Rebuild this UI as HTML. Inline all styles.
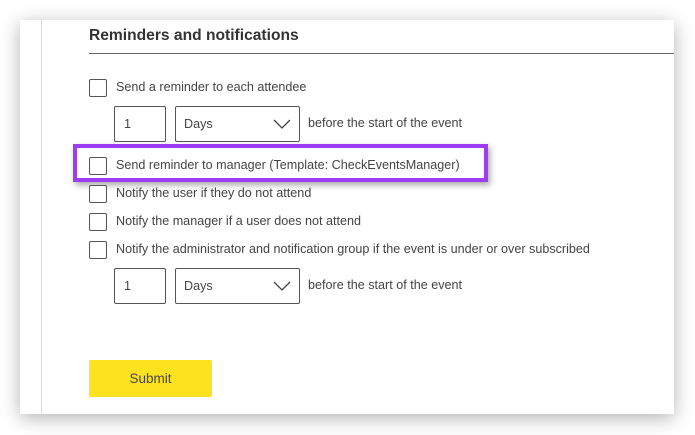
<!DOCTYPE html>
<html><head><style>
body{margin:0;width:695px;height:435px;background:#fff;position:relative;overflow:hidden;font-family:"Liberation Sans",sans-serif;color:#444;}
.panel{position:absolute;left:20px;top:20px;width:654px;height:394px;background:#fff;box-shadow:0 4px 18px rgba(0,0,0,.3);}
.vl{position:absolute;left:41px;top:20px;width:1px;height:394px;background:#ddd;}
.t{position:absolute;left:89px;top:27px;font-size:15.6px;font-weight:bold;color:#333;}
.hr{position:absolute;left:89px;top:53px;width:585px;height:1px;background:#666;}
.cb{position:absolute;left:89px;width:16px;height:16px;border:1px solid #555;border-radius:2px;background:#fff;}
.lb{position:absolute;left:116px;font-size:12.6px;color:#444;}
.in{position:absolute;left:114px;width:50px;height:34px;border:1px solid #555;border-radius:2px;font-size:12.6px;}
.in span{position:absolute;left:9px;top:10px;}
.sel{position:absolute;left:175px;width:123px;height:34px;border:1px solid #555;border-radius:2px;font-size:12.6px;}
.sel span{position:absolute;left:8px;top:10px;}
.sel svg{position:absolute;right:8px;top:12px;}
.bf{position:absolute;left:308px;font-size:12.6px;}
.hl{position:absolute;left:73px;top:144px;width:407px;height:30px;border:4px solid #9d3cf2;box-shadow:2px 3px 6px rgba(0,0,0,.35);}
.btn{position:absolute;left:89px;top:360px;width:123px;height:37px;background:#fde220;border-radius:2px;font-size:13.5px;color:#444;text-align:center;line-height:37px;}
</style></head><body>
<div class="panel"></div>
<div class="vl"></div>
<div class="t">Reminders and notifications</div>
<div class="hr"></div>
<div class="cb" style="top:79px"></div><div class="lb" style="top:80px">Send a reminder to each attendee</div>
<div class="in" style="top:106px"><span>1</span></div>
<div class="sel" style="top:106px"><span>Days</span><svg width="18" height="10"><path d="M1 1 L9 9 L17 1" fill="none" stroke="#444" stroke-width="1.3"/></svg></div>
<div class="bf" style="top:116px">before the start of the event</div>
<div class="hl"></div>
<div class="cb" style="top:157px"></div><div class="lb" style="top:158px">Send reminder to manager (Template: CheckEventsManager)</div>
<div class="cb" style="top:185px"></div><div class="lb" style="top:186px">Notify the user if they do not attend</div>
<div class="cb" style="top:213px"></div><div class="lb" style="top:214px">Notify the manager if a user does not attend</div>
<div class="cb" style="top:241px"></div><div class="lb" style="top:242px">Notify the administrator and notification group if the event is under or over subscribed</div>
<div class="in" style="top:268px"><span>1</span></div>
<div class="sel" style="top:268px"><span>Days</span><svg width="18" height="10"><path d="M1 1 L9 9 L17 1" fill="none" stroke="#444" stroke-width="1.3"/></svg></div>
<div class="bf" style="top:278px">before the start of the event</div>
<div class="btn">Submit</div>
</body></html>
